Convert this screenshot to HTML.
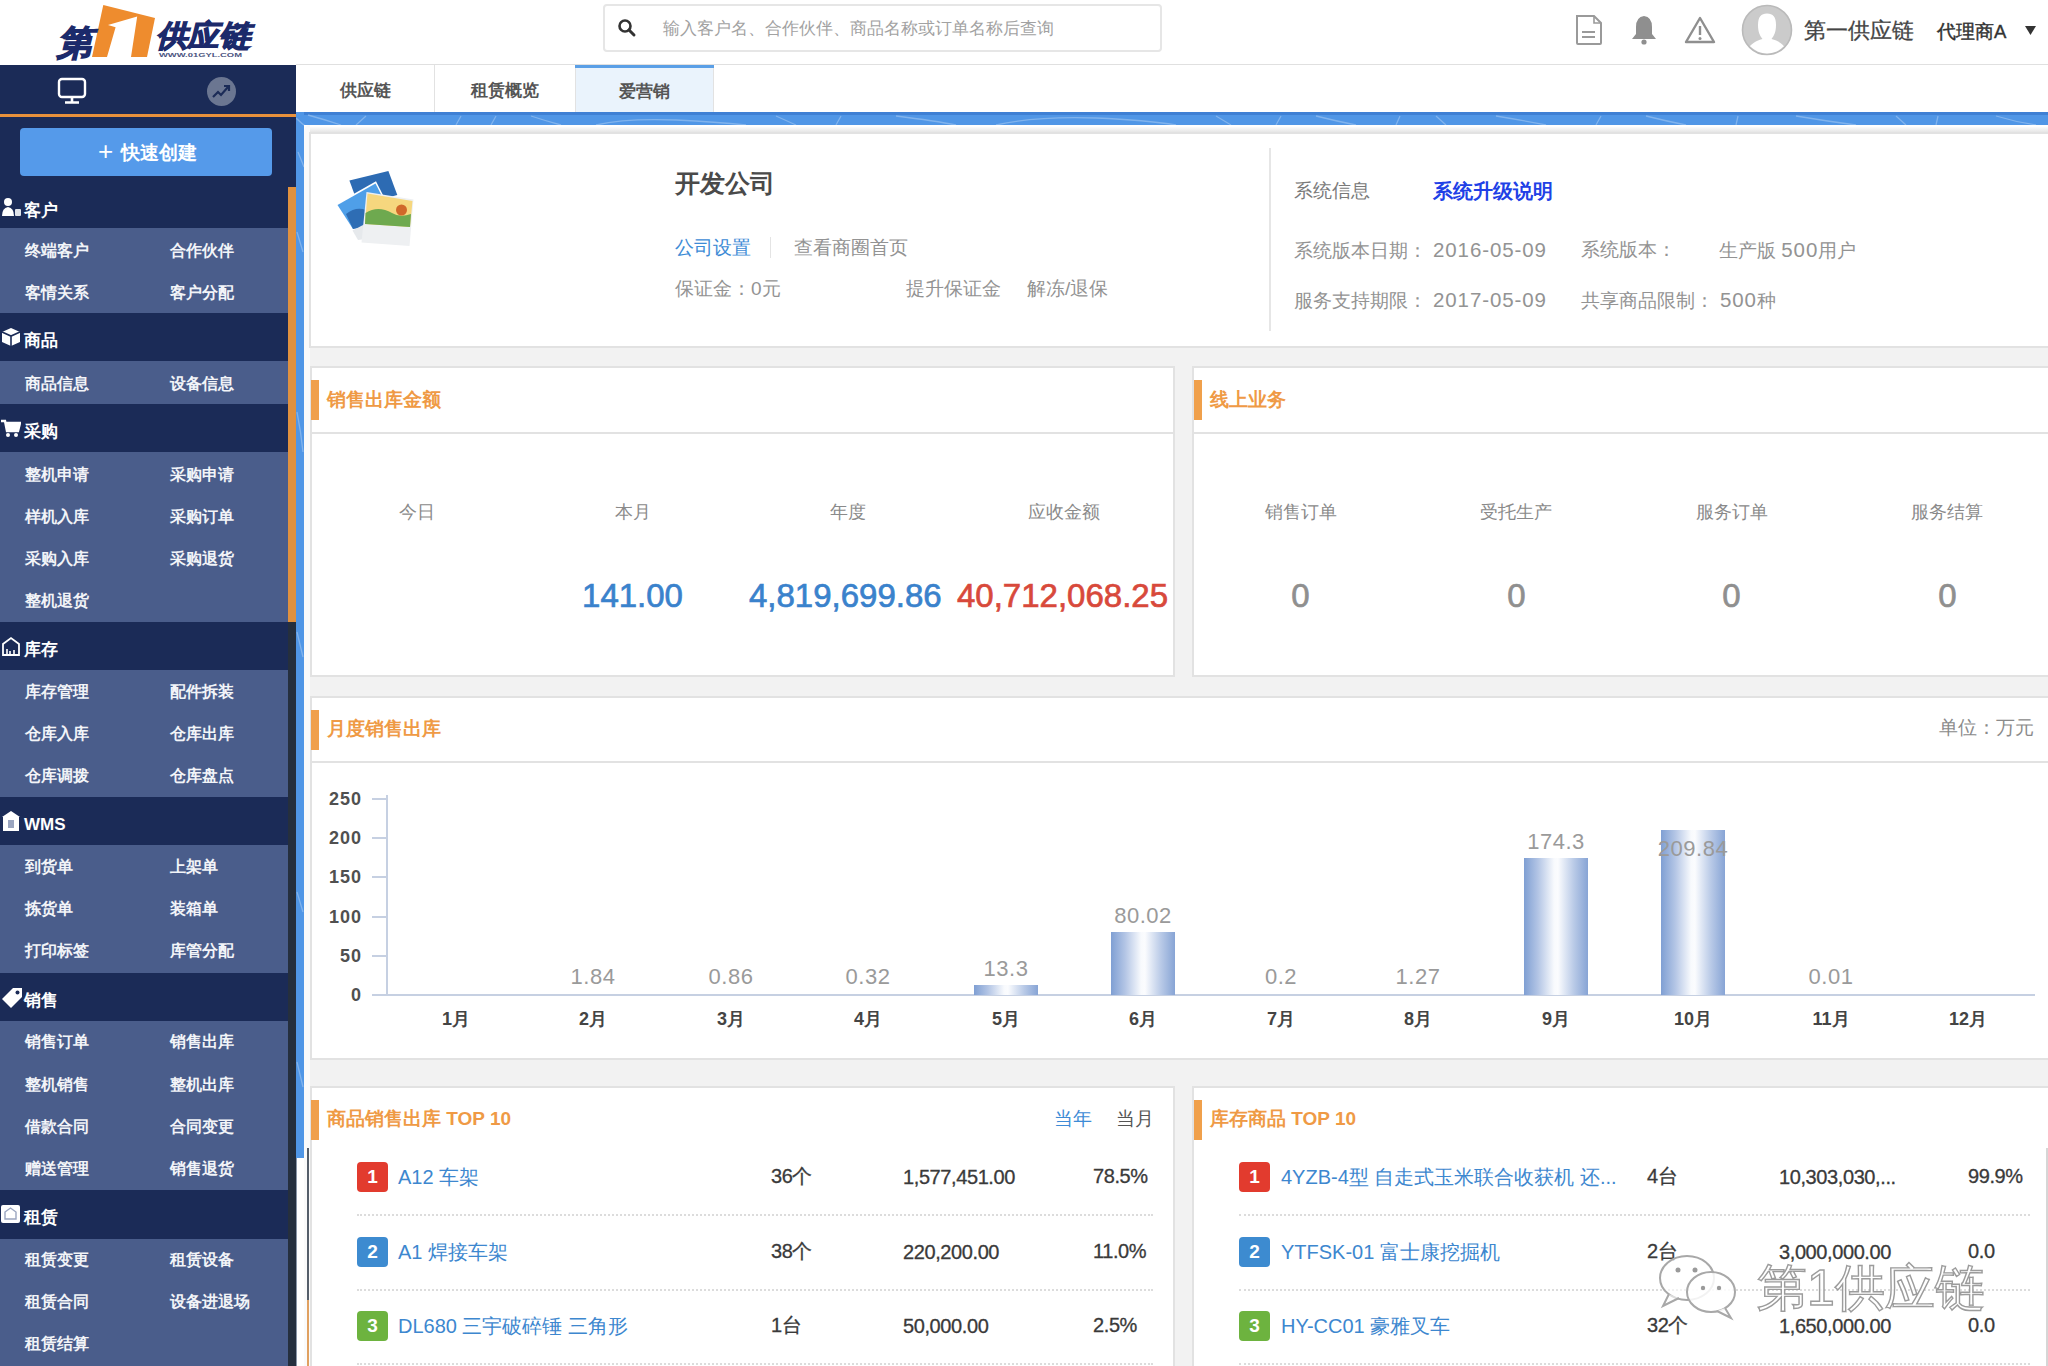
<!DOCTYPE html>
<html><head><meta charset="utf-8">
<style>
*{margin:0;padding:0;box-sizing:border-box}
html,body{width:2048px;height:1366px;overflow:hidden;background:#fff;font-family:"Liberation Sans",sans-serif;position:relative}
.a{position:absolute;white-space:nowrap}
.sh{position:absolute;left:0;width:288px;background:#1b2b57}
.sm{position:absolute;left:0;width:288px;background:#4a5d8b}
.si{color:#f2f4f8;font-size:16px;line-height:20px;font-weight:bold}
.card{position:absolute;background:#fff;border:2px solid #e2e2e2}
.ob{position:absolute;width:8px;height:40px;background:#f0a04b}
.ot{position:absolute;color:#ef9a45;font-size:19px;line-height:24px;font-weight:bold;white-space:nowrap}
.lbl{position:absolute;color:#8a8a8a;font-size:18px;line-height:22px;white-space:nowrap;text-align:center;width:200px}
.val{position:absolute;-webkit-text-stroke:0.7px currentColor;font-size:33px;line-height:36px;white-space:nowrap;text-align:center;width:215px}
.g{color:#939393;font-size:19px;line-height:24px}
.dg{font-size:20.5px;letter-spacing:0.9px}
.dm{margin-left:6px}
.bar{position:absolute;width:64px;background:linear-gradient(90deg,#7f9fd3 0%,#b3c5e5 22%,#f8fafd 47%,#fbfcfe 53%,#b9cae7 78%,#87a4d5 100%)}
.bv{position:absolute;color:#9a9a9a;font-size:22px;line-height:24px;text-align:center;width:120px;letter-spacing:0.5px}
.mo{position:absolute;color:#444;font-size:18px;line-height:22px;font-weight:bold;text-align:center;width:80px}
.yl{position:absolute;color:#505050;font-size:18px;line-height:22px;font-weight:bold;text-align:right;width:50px;letter-spacing:1px}
.bd{position:absolute;width:31px;height:30px;border-radius:4px;color:#fff;font-size:19px;font-weight:bold;text-align:center;line-height:30px}
.nm{position:absolute;color:#3d87cf;font-size:20px;line-height:24px;white-space:nowrap}
.tx{position:absolute;color:#3a3a3a;font-size:20px;line-height:24px;white-space:nowrap;letter-spacing:-0.4px;-webkit-text-stroke:0.3px currentColor}
.dl{position:absolute;height:0;border-top:2px dotted #dcdcdc}
</style></head><body>

<!-- ============ HEADER ============ -->
<svg class="a" style="left:50px;top:0" width="210" height="64" viewBox="50 0 210 64">
  <polygon points="103.3,5 155,18 147,57 92,57" fill="#ee8c2e"/>
  <polygon points="108,25 137.2,16.4 131,57 107,57 115.6,27.2" fill="#fff"/>
  <text x="57" y="55" font-family="Liberation Sans" font-size="35" font-weight="bold" font-style="italic" fill="#1c2a6b" stroke="#1c2a6b" stroke-width="1.4">第</text>
  <text x="156" y="46" font-family="Liberation Sans" font-size="30" font-weight="bold" font-style="italic" fill="#1c2a6b" stroke="#1c2a6b" stroke-width="1.2" textLength="94" lengthAdjust="spacingAndGlyphs">供应链</text>
  <text x="159" y="57" font-family="Liberation Sans" font-size="6" font-weight="bold" fill="#4a5380" textLength="83" lengthAdjust="spacingAndGlyphs">WWW.01GYL.COM</text>
</svg>

<div class="a" style="left:603px;top:4px;width:559px;height:48px;border:2px solid #e6e6e6;border-radius:4px;background:#fff"></div>
<svg class="a" style="left:617px;top:18px" width="20" height="20" viewBox="0 0 20 20"><circle cx="8" cy="8" r="5.5" stroke="#333" stroke-width="2.6" fill="none"/><path d="M12 12 L17 17" stroke="#333" stroke-width="3" stroke-linecap="round"/></svg>
<div class="a" style="left:663px;top:18px;font-size:16.5px;line-height:20px;color:#a2a2a2">输入客户名、合作伙伴、商品名称或订单名称后查询</div>

<!-- right header icons -->
<svg class="a" style="left:1574px;top:14px" width="30" height="32" viewBox="0 0 30 32"><path d="M3 2 H20 L27 9 V29 Q27 30 26 30 H4 Q3 30 3 29Z" fill="none" stroke="#9a9a9a" stroke-width="2"/><path d="M20 2 V9 H27" fill="none" stroke="#9a9a9a" stroke-width="1.6"/><path d="M8 18 H21 M8 23 H21" stroke="#9a9a9a" stroke-width="2"/></svg>
<svg class="a" style="left:1630px;top:14px" width="28" height="32" viewBox="0 0 28 32"><path d="M14 2 Q6 3 6 13 V20 L2 25 H26 L22 20 V13 Q22 3 14 2Z" fill="#8f8f8f"/><circle cx="14" cy="28" r="2.6" fill="#8f8f8f"/></svg>
<svg class="a" style="left:1684px;top:16px" width="32" height="28" viewBox="0 0 32 28"><path d="M16 2 L30 26 H2Z" fill="none" stroke="#8f8f8f" stroke-width="2.4" stroke-linejoin="round"/><path d="M16 10 V19" stroke="#8f8f8f" stroke-width="2.4"/><circle cx="16" cy="22.5" r="1.5" fill="#8f8f8f"/></svg>
<svg class="a" style="left:1741px;top:4px" width="52" height="52" viewBox="0 0 52 52"><defs><clipPath id="cav"><circle cx="26" cy="26" r="23.5"/></clipPath></defs><circle cx="26" cy="26" r="24.5" fill="#cbcbcb" stroke="#bababa" stroke-width="1.6"/><g clip-path="url(#cav)"><path d="M26 9.5 C32 9.5 35 13 35 21 C35 28 33 32 30.5 35 C38 37 42 40 45 45 L45 52 L7 52 L7 45 C10 40 14 37 21.5 35 C19 32 17 28 17 21 C17 13 20 9.5 26 9.5Z" fill="#fff"/></g></svg>
<div class="a" style="left:1804px;top:17px;font-size:22px;line-height:28px;color:#444;-webkit-text-stroke:0.3px #444">第一供应链</div>
<div class="a" style="left:1937px;top:20px;font-size:18.5px;line-height:24px;color:#333;-webkit-text-stroke:0.4px #333">代理商A</div>
<svg class="a" style="left:2025px;top:26px" width="11" height="10" viewBox="0 0 11 10"><path d="M0 0 H11 L5.5 9Z" fill="#333"/></svg>

<div class="a" style="left:296px;top:64px;width:1752px;height:1px;background:#e0e0e0"></div>

<!-- ============ SIDEBAR ============ -->
<div class="a" style="left:0;top:65px;width:296px;height:1301px;background:#1b2b57"></div>
<!-- icons row -->
<svg class="a" style="left:57px;top:77px" width="30" height="28" viewBox="0 0 30 28"><rect x="2" y="2" width="26" height="18" rx="3" fill="none" stroke="#fff" stroke-width="2.4"/><path d="M15 20 V25 M8 25.5 H22" stroke="#fff" stroke-width="2.6"/></svg>
<svg class="a" style="left:206px;top:76px" width="31" height="31" viewBox="0 0 31 31"><circle cx="15.5" cy="15.5" r="14.5" fill="#6b7691"/><path d="M7 21 L12 16 L15 19 L22 11" stroke="#1b2b57" stroke-width="2.2" fill="none"/><path d="M18 10 H23 V15" stroke="#1b2b57" stroke-width="2.2" fill="none"/></svg>
<div class="a" style="left:0;top:114px;width:296px;height:3px;background:#e8913c"></div>
<div class="a" style="left:20px;top:128px;width:252px;height:48px;background:#559aea;border-radius:4px"></div>
<div class="a" style="left:98px;top:138px;font-size:26px;line-height:26px;color:#fff;font-weight:normal">+</div><div class="a" style="left:121px;top:141px;font-size:19px;line-height:24px;color:#fff;font-weight:bold">快速创建</div>
<!-- scrollbar -->
<div class="a" style="left:288px;top:187px;width:8px;height:1179px;background:#252f3e"></div>
<div class="a" style="left:287px;top:187px;width:9px;height:435px;background:#e0913f"></div>
<div class="sh" style="top:187px;height:41px"></div>
<svg class="a" style="left:1px;top:197px" width="22" height="20" viewBox="0 0 22 20"><circle cx="7" cy="5" r="4" fill="#fff"/><path d="M1 19 Q1 11 7 10 Q13 11 13 19Z" fill="#fff"/><rect x="14" y="12" width="6" height="7" rx="1" fill="#dfe3ea"/></svg>
<div class="a" style="left:24px;top:200px;font-size:17px;line-height:22px;color:#fff;font-weight:bold">客户</div>
<div class="sm" style="top:228px;height:85px"></div>
<div class="a si" style="left:25px;top:241px">终端客户</div>
<div class="a si" style="left:170px;top:241px">合作伙伴</div>
<div class="a si" style="left:25px;top:283px">客情关系</div>
<div class="a si" style="left:170px;top:283px">客户分配</div>
<div class="sh" style="top:313px;height:48px"></div>
<svg class="a" style="left:1px;top:327px" width="20" height="20" viewBox="0 0 20 20"><path d="M10 1 L19 5 L19 15 L10 19 L1 15 L1 5Z" fill="#fff"/><path d="M1 5 L10 9 L19 5 M10 9 L10 19" stroke="#1b2b57" stroke-width="1.6" fill="none"/></svg>
<div class="a" style="left:24px;top:330px;font-size:17px;line-height:22px;color:#fff;font-weight:bold">商品</div>
<div class="sm" style="top:361px;height:43px"></div>
<div class="a si" style="left:25px;top:374px">商品信息</div>
<div class="a si" style="left:170px;top:374px">设备信息</div>
<div class="sh" style="top:404px;height:48px"></div>
<svg class="a" style="left:1px;top:418px" width="20" height="20" viewBox="0 0 20 20"><path d="M0 3 H4 L6 13 H17 L19 5 H5" stroke="#fff" stroke-width="2.4" fill="none"/><rect x="5" y="5" width="13" height="7" fill="#fff"/><circle cx="7" cy="17" r="2" fill="#fff"/><circle cx="15" cy="17" r="2" fill="#fff"/></svg>
<div class="a" style="left:24px;top:421px;font-size:17px;line-height:22px;color:#fff;font-weight:bold">采购</div>
<div class="sm" style="top:452px;height:170px"></div>
<div class="a si" style="left:25px;top:465px">整机申请</div>
<div class="a si" style="left:170px;top:465px">采购申请</div>
<div class="a si" style="left:25px;top:507px">样机入库</div>
<div class="a si" style="left:170px;top:507px">采购订单</div>
<div class="a si" style="left:25px;top:549px">采购入库</div>
<div class="a si" style="left:170px;top:549px">采购退货</div>
<div class="a si" style="left:25px;top:591px">整机退货</div>
<div class="sh" style="top:622px;height:48px"></div>
<svg class="a" style="left:1px;top:636px" width="20" height="20" viewBox="0 0 20 20"><path d="M2 19 V8 L10 2 L18 8 V19Z" stroke="#fff" stroke-width="1.8" fill="none"/><path d="M6 18 V13 M9 18 V15 M13 18 V14" stroke="#fff" stroke-width="1.6"/></svg>
<div class="a" style="left:24px;top:639px;font-size:17px;line-height:22px;color:#fff;font-weight:bold">库存</div>
<div class="sm" style="top:670px;height:127px"></div>
<div class="a si" style="left:25px;top:682px">库存管理</div>
<div class="a si" style="left:170px;top:682px">配件拆装</div>
<div class="a si" style="left:25px;top:724px">仓库入库</div>
<div class="a si" style="left:170px;top:724px">仓库出库</div>
<div class="a si" style="left:25px;top:766px">仓库调拨</div>
<div class="a si" style="left:170px;top:766px">仓库盘点</div>
<div class="sh" style="top:797px;height:48px"></div>
<svg class="a" style="left:1px;top:811px" width="20" height="20" viewBox="0 0 20 20"><path d="M10 0 L19 6 H1Z" fill="#fff"/><rect x="2" y="6" width="16" height="14" fill="#fff"/><rect x="7" y="9" width="6" height="8" fill="#9aa5c0"/></svg>
<div class="a" style="left:24px;top:814px;font-size:17px;line-height:22px;color:#fff;font-weight:bold">WMS</div>
<div class="sm" style="top:845px;height:128px"></div>
<div class="a si" style="left:25px;top:857px">到货单</div>
<div class="a si" style="left:170px;top:857px">上架单</div>
<div class="a si" style="left:25px;top:899px">拣货单</div>
<div class="a si" style="left:170px;top:899px">装箱单</div>
<div class="a si" style="left:25px;top:941px">打印标签</div>
<div class="a si" style="left:170px;top:941px">库管分配</div>
<div class="sh" style="top:973px;height:48px"></div>
<svg class="a" style="left:1px;top:987px" width="22" height="22" viewBox="0 0 22 22"><path d="M12 1 H21 V10 L10 21 L1 12Z" fill="#fff"/><circle cx="16.5" cy="5.5" r="2" fill="#1b2b57"/></svg>
<div class="a" style="left:24px;top:990px;font-size:17px;line-height:22px;color:#fff;font-weight:bold">销售</div>
<div class="sm" style="top:1021px;height:169px"></div>
<div class="a si" style="left:25px;top:1032px">销售订单</div>
<div class="a si" style="left:170px;top:1032px">销售出库</div>
<div class="a si" style="left:25px;top:1075px">整机销售</div>
<div class="a si" style="left:170px;top:1075px">整机出库</div>
<div class="a si" style="left:25px;top:1117px">借款合同</div>
<div class="a si" style="left:170px;top:1117px">合同变更</div>
<div class="a si" style="left:25px;top:1159px">赠送管理</div>
<div class="a si" style="left:170px;top:1159px">销售退货</div>
<div class="sh" style="top:1190px;height:49px"></div>
<svg class="a" style="left:1px;top:1204px" width="20" height="20" viewBox="0 0 20 20"><rect x="0" y="1" width="19" height="18" rx="2" fill="#fff"/><path d="M4 8 L9.5 4 L15 8 V15 H4Z" fill="none" stroke="#9aa5c0" stroke-width="1.4"/></svg>
<div class="a" style="left:24px;top:1207px;font-size:17px;line-height:22px;color:#fff;font-weight:bold">租赁</div>
<div class="sm" style="top:1239px;height:127px"></div>
<div class="a si" style="left:25px;top:1250px">租赁变更</div>
<div class="a si" style="left:170px;top:1250px">租赁设备</div>
<div class="a si" style="left:25px;top:1292px">租赁合同</div>
<div class="a si" style="left:170px;top:1292px">设备进退场</div>
<div class="a si" style="left:25px;top:1334px">租赁结算</div>

<!-- ============ TABS ============ -->
<div class="a" style="left:434px;top:65px;width:1px;height:47px;background:#e2e2e2"></div>
<div class="a" style="left:575px;top:65px;width:139px;height:47px;background:#eaf3fc;border-right:1px solid #e2e2e2;border-left:1px solid #e2e2e2"></div>
<div class="a" style="left:575px;top:65px;width:139px;height:3px;background:#5a9fe6"></div>
<div class="a" style="left:340px;top:80px;font-size:17px;line-height:22px;color:#555;font-weight:bold">供应链</div>
<div class="a" style="left:471px;top:80px;font-size:17px;line-height:22px;color:#555;font-weight:bold">租赁概览</div>
<div class="a" style="left:619px;top:81px;font-size:17px;line-height:22px;color:#555;font-weight:bold">爱营销</div>

<!-- ============ BLUE FRAME ============ -->
<div class="a" style="left:296px;top:112px;width:1752px;height:13px;background:#5096e6"></div>
<div class="a" style="left:296px;top:112px;width:1752px;height:3px;background:#3f80d4"></div>
<div class="a" style="left:296px;top:112px;width:8px;height:1046px;background:#5096e6"></div>
<svg class="a" style="left:296px;top:112px" width="1752" height="1046" viewBox="0 0 1752 1046">
<g stroke="rgba(255,255,255,0.28)" stroke-width="1.3" fill="none">
<path d="M0 6 Q6 12 12 16 M2 40 L8 55 M1 120 L7 140 M1 300 Q5 320 7 340 M1 520 L7 545 M1 780 L7 800 M1 950 L7 975"/>
<path d="M12 3 Q30 8 45 13 M60 13 L70 4 M160 13 L165 4 M195 13 L200 4 M235 4 Q250 9 265 13 M300 13 Q330 6 380 8 Q420 10 450 13 M480 4 L500 13 M540 13 L545 4"/>
<path d="M600 4 Q640 9 660 13 M700 13 Q740 4 800 6 Q850 8 880 13 M920 4 L935 13 M980 13 L985 4 M1020 4 Q1040 9 1060 13 M1100 13 L1104 4 M1140 4 L1150 13"/>
<path d="M1200 4 Q1230 9 1250 13 M1300 13 L1305 4 M1350 4 Q1370 9 1390 13 M1440 13 L1442 4 M1500 4 Q1530 9 1560 13 M1600 4 L1610 13 M1640 13 L1642 4 M1700 4 Q1720 10 1740 13"/>
</g></svg>
<div class="a" style="left:296px;top:1158px;width:1px;height:208px;background:#8a96a8"></div>

<!-- content bg -->
<div class="a" style="left:304px;top:125px;width:1744px;height:1241px;background:#f2f2f2;border-top-left-radius:9px"></div>
<div class="a" style="left:304px;top:125px;width:1744px;height:6px;background:#fff;border-top-left-radius:9px"></div>
<div class="a" style="left:304px;top:125px;width:6px;height:1241px;background:#fafafa;border-top-left-radius:9px"></div>
<div class="a" style="left:310px;top:127px;width:1738px;height:5px;background:linear-gradient(#fbfbfb,#e6e6e6)"></div>

<!-- ============ CARD 1: company ============ -->
<div class="card" style="left:309px;top:132px;width:1745px;height:216px;border-width:2px 0 2px 2px;border-color:#e2e2e2"></div>
<svg class="a" style="left:334px;top:168px" width="82" height="80" viewBox="334 168 82 80">
<polygon points="349.4,180.6 388.4,170.9 397.3,195.1 358.6,205.6" fill="#2d6bb3"/>
<polygon points="335.5,204.3 376,181.2 391,211 352.2,231" fill="#fff"/>
<polygon points="337.5,205 375.5,183.5 389,210 353,229" fill="#4f9fe8"/>
<path d="M353,229 L346,214 Q356,206 366,210 L372,226Z" fill="#2e6db4"/>
<polygon points="352.5,230.5 390,211 388,236 358,240" fill="#e6e9ec"/>
<polygon points="366.5,192 413.5,199.5 409.5,246 361.5,242.5" fill="#eef0f2"/>
<polygon points="367.5,193.5 412.5,201 410,227 365,224" fill="#f6d77e"/>
<path d="M365.5,213 Q378,205 392,213 Q400,218 411,214 L410,227 L365,224Z" fill="#6ea94f"/>
<circle cx="401.5" cy="210" r="5.5" fill="#d0682a"/>
</svg>
<div class="a" style="left:675px;top:168px;font-size:25px;line-height:30px;color:#4a4a4a;font-weight:bold">开发公司</div>
<div class="a" style="left:675px;top:236px;font-size:19px;line-height:24px;color:#3d8bd6">公司设置</div>
<div class="a" style="left:770px;top:237px;width:1px;height:21px;background:#e4e4e4"></div>
<div class="a g" style="left:794px;top:236px">查看商圈首页</div>
<div class="a g" style="left:675px;top:277px">保证金：0元</div>
<div class="a g" style="left:906px;top:277px">提升保证金</div>
<div class="a g" style="left:1027px;top:277px">解冻/退保</div>
<div class="a" style="left:1269px;top:148px;width:2px;height:183px;background:#e6e6e6"></div>
<div class="a g" style="left:1294px;top:179px;color:#7a7a7a">系统信息</div>
<div class="a" style="left:1433px;top:179px;font-size:19.5px;line-height:24px;color:#2040e6;font-weight:bold">系统升级说明</div>
<div class="a g" style="left:1294px;top:238px">系统版本日期：<span class="dg dm">2016-05-09</span></div>
<div class="a g" style="left:1581px;top:238px">系统版本：</div>
<div class="a g" style="left:1719px;top:238px">生产版 <span class="dg">500</span>用户</div>
<div class="a g" style="left:1294px;top:288px">服务支持期限：<span class="dg dm">2017-05-09</span></div>
<div class="a g" style="left:1581px;top:288px">共享商品限制：<span class="dg dm">500</span>种</div>

<!-- ============ CARD 2: sales ============ -->
<div class="card" style="left:310px;top:366px;width:865px;height:311px"></div>
<div class="a" style="left:312px;top:432px;width:861px;height:2px;background:#e2e2e2"></div>
<div class="ob" style="left:311px;top:380px"></div>
<div class="ot" style="left:327px;top:388px">销售出库金额</div>
<div class="lbl" style="left:317px;top:501px">今日</div>
<div class="lbl" style="left:533px;top:501px">本月</div>
<div class="lbl" style="left:748px;top:501px">年度</div>
<div class="lbl" style="left:964px;top:501px">应收金额</div>
<div class="val" style="left:525px;top:578px;color:#3a82cc">141.00</div>
<div class="a" style="left:749px;top:578px;-webkit-text-stroke:0.7px currentColor;font-size:33px;line-height:36px;color:#3a82cc">4,819,699.86</div>
<div class="a" style="left:957px;top:578px;-webkit-text-stroke:0.7px currentColor;font-size:33px;line-height:36px;color:#d8493b">40,712,068.25</div>

<!-- ============ CARD 3: online ============ -->
<div class="card" style="left:1192px;top:366px;width:870px;height:311px"></div>
<div class="a" style="left:1194px;top:432px;width:860px;height:2px;background:#e2e2e2"></div>
<div class="ob" style="left:1194px;top:380px"></div>
<div class="ot" style="left:1210px;top:388px">线上业务</div>
<div class="lbl" style="left:1201px;top:501px">销售订单</div>
<div class="lbl" style="left:1416px;top:501px">受托生产</div>
<div class="lbl" style="left:1632px;top:501px">服务订单</div>
<div class="lbl" style="left:1847px;top:501px">服务结算</div>
<div class="val" style="left:1193px;top:578px;color:#8f8f8f">0</div>
<div class="val" style="left:1409px;top:578px;color:#8f8f8f">0</div>
<div class="val" style="left:1624px;top:578px;color:#8f8f8f">0</div>
<div class="val" style="left:1840px;top:578px;color:#8f8f8f">0</div>

<!-- ============ CARD 4: chart ============ -->
<div class="card" style="left:310px;top:696px;width:1745px;height:364px"></div>
<div class="a" style="left:312px;top:761px;width:1740px;height:2px;background:#e2e2e2"></div>
<div class="ob" style="left:311px;top:710px"></div>
<div class="ot" style="left:327px;top:717px">月度销售出库</div>
<div class="a" style="left:1939px;top:716px;font-size:19px;line-height:24px;color:#8a8a8a">单位：万元</div>
<div class="a" style="left:386px;top:795px;width:2px;height:201px;background:#c6d0e2"></div>
<div class="a" style="left:387px;top:994px;width:1648px;height:2px;background:#c6d0e2"></div>
<div class="a" style="left:372px;top:798px;width:14px;height:2px;background:#c6d0e2"></div>
<div class="yl" style="left:312px;top:788px">250</div>
<div class="a" style="left:372px;top:837px;width:14px;height:2px;background:#c6d0e2"></div>
<div class="yl" style="left:312px;top:827px">200</div>
<div class="a" style="left:372px;top:876px;width:14px;height:2px;background:#c6d0e2"></div>
<div class="yl" style="left:312px;top:866px">150</div>
<div class="a" style="left:372px;top:916px;width:14px;height:2px;background:#c6d0e2"></div>
<div class="yl" style="left:312px;top:906px">100</div>
<div class="a" style="left:372px;top:955px;width:14px;height:2px;background:#c6d0e2"></div>
<div class="yl" style="left:312px;top:945px">50</div>
<div class="a" style="left:372px;top:994px;width:14px;height:2px;background:#c6d0e2"></div>
<div class="yl" style="left:312px;top:984px">0</div>
<div class="mo" style="left:416px;top:1008px">1月</div>
<div class="mo" style="left:553px;top:1008px">2月</div>
<div class="bv" style="left:533px;top:965px">1.84</div>
<div class="mo" style="left:691px;top:1008px">3月</div>
<div class="bv" style="left:671px;top:965px">0.86</div>
<div class="mo" style="left:828px;top:1008px">4月</div>
<div class="bv" style="left:808px;top:965px">0.32</div>
<div class="mo" style="left:966px;top:1008px">5月</div>
<div class="bar" style="left:974px;top:985px;height:10px"></div>
<div class="bv" style="left:946px;top:957px">13.3</div>
<div class="mo" style="left:1103px;top:1008px">6月</div>
<div class="bar" style="left:1111px;top:932px;height:63px"></div>
<div class="bv" style="left:1083px;top:904px">80.02</div>
<div class="mo" style="left:1241px;top:1008px">7月</div>
<div class="bv" style="left:1221px;top:965px">0.2</div>
<div class="mo" style="left:1378px;top:1008px">8月</div>
<div class="bv" style="left:1358px;top:965px">1.27</div>
<div class="mo" style="left:1516px;top:1008px">9月</div>
<div class="bar" style="left:1524px;top:858px;height:137px"></div>
<div class="bv" style="left:1496px;top:830px">174.3</div>
<div class="mo" style="left:1653px;top:1008px">10月</div>
<div class="bar" style="left:1661px;top:830px;height:165px"></div>
<div class="bv" style="left:1633px;top:837px">209.84</div>
<div class="mo" style="left:1791px;top:1008px">11月</div>
<div class="bv" style="left:1771px;top:965px">0.01</div>
<div class="mo" style="left:1928px;top:1008px">12月</div>

<!-- ============ CARD 5: top10 sales ============ -->
<div class="card" style="left:310px;top:1086px;width:865px;height:300px"></div>
<div class="ob" style="left:311px;top:1100px"></div>
<div class="ot" style="left:327px;top:1107px">商品销售出库 TOP 10</div>
<div class="a" style="left:1054px;top:1107px;font-size:19px;line-height:24px;color:#3d8bd6">当年</div>
<div class="a" style="left:1116px;top:1107px;font-size:19px;line-height:24px;color:#555">当月</div>
<div class="bd" style="left:357px;top:1162px;background:#e23b2e">1</div>
<div class="nm" style="left:398px;top:1165px">A12 车架</div>
<div class="tx" style="left:771px;top:1164px">36个</div>
<div class="tx" style="left:903px;top:1165px">1,577,451.00</div>
<div class="tx" style="left:1093px;top:1164px">78.5%</div>
<div class="dl" style="left:357px;top:1214px;width:796px"></div>
<div class="bd" style="left:357px;top:1237px;background:#3d8bd0">2</div>
<div class="nm" style="left:398px;top:1240px">A1 焊接车架</div>
<div class="tx" style="left:771px;top:1239px">38个</div>
<div class="tx" style="left:903px;top:1240px">220,200.00</div>
<div class="tx" style="left:1093px;top:1239px">11.0%</div>
<div class="dl" style="left:357px;top:1289px;width:796px"></div>
<div class="bd" style="left:357px;top:1311px;background:#6db33f">3</div>
<div class="nm" style="left:398px;top:1314px">DL680 三宇破碎锤 三角形</div>
<div class="tx" style="left:771px;top:1313px">1台</div>
<div class="tx" style="left:903px;top:1314px">50,000.00</div>
<div class="tx" style="left:1093px;top:1313px">2.5%</div>
<div class="dl" style="left:357px;top:1363px;width:796px"></div>

<!-- ============ CARD 6: top10 stock ============ -->
<div class="card" style="left:1192px;top:1086px;width:870px;height:300px"></div>
<div class="ob" style="left:1194px;top:1100px"></div>
<div class="ot" style="left:1210px;top:1107px">库存商品 TOP 10</div>
<div class="bd" style="left:1239px;top:1162px;background:#e23b2e">1</div>
<div class="nm" style="left:1281px;top:1165px">4YZB-4型 自走式玉米联合收获机 还...</div>
<div class="tx" style="left:1647px;top:1164px">4台</div>
<div class="tx" style="left:1779px;top:1165px">10,303,030,...</div>
<div class="tx" style="left:1968px;top:1164px">99.9%</div>
<div class="dl" style="left:1239px;top:1214px;width:791px"></div>
<div class="bd" style="left:1239px;top:1237px;background:#3d8bd0">2</div>
<div class="nm" style="left:1281px;top:1240px">YTFSK-01 富士康挖掘机</div>
<div class="tx" style="left:1647px;top:1239px">2台</div>
<div class="tx" style="left:1779px;top:1240px">3,000,000.00</div>
<div class="tx" style="left:1968px;top:1239px">0.0</div>
<div class="dl" style="left:1239px;top:1289px;width:791px"></div>
<div class="bd" style="left:1239px;top:1311px;background:#6db33f">3</div>
<div class="nm" style="left:1281px;top:1314px">HY-CC01 豪雅叉车</div>
<div class="tx" style="left:1647px;top:1313px">32个</div>
<div class="tx" style="left:1779px;top:1314px">1,650,000.00</div>
<div class="tx" style="left:1968px;top:1313px">0.0</div>
<div class="dl" style="left:1239px;top:1363px;width:791px"></div>

<!-- left thin scrollbar in content -->
<div class="a" style="left:307px;top:1148px;width:2px;height:152px;background:#555e6a"></div>
<div class="a" style="left:307px;top:1300px;width:2px;height:66px;background:#e0a060"></div>

<svg class="a" style="left:1655px;top:1250px" width="90" height="72" viewBox="0 0 90 72">
<ellipse cx="32" cy="28" rx="27" ry="22" fill="rgba(255,255,255,0.6)" stroke="#a8a8a8" stroke-width="2"/>
<path d="M14 44 L8 56 L24 48" fill="rgba(255,255,255,0.6)" stroke="#a8a8a8" stroke-width="2"/>
<ellipse cx="56" cy="42" rx="24" ry="20" fill="rgba(255,255,255,0.85)" stroke="#a8a8a8" stroke-width="2"/>
<path d="M70 58 L76 68 L62 61" fill="rgba(255,255,255,0.85)" stroke="#a8a8a8" stroke-width="2"/>
<circle cx="23" cy="20" r="2.5" fill="#9a9a9a"/><circle cx="40" cy="20" r="2.5" fill="#9a9a9a"/>
<circle cx="48" cy="38" r="2.2" fill="#9a9a9a"/><circle cx="64" cy="38" r="2.2" fill="#9a9a9a"/>
</svg>
<div class="a" style="left:1757px;top:1258px;font-size:50px;line-height:60px;color:rgba(255,255,255,0.8);-webkit-text-stroke:1.4px #9c9c9c">第1供应链</div>
<div class="a" style="left:2046px;top:1148px;width:2px;height:218px;background:#d6d6d6"></div>

</body></html>
